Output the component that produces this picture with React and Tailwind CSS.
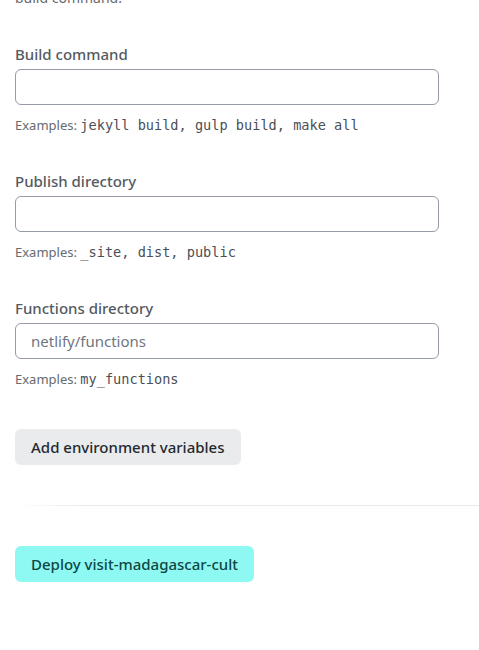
import React from "react";

const sans = "font-['Noto_Sans',_'Open_Sans',_sans-serif]";
const mono = "font-['DejaVu_Sans_Mono',_'Liberation_Mono',_monospace]";

const Field = ({ label, placeholder, examples }) => (
  <div className="flex flex-col">
    <label className="text-[15px] leading-[22px] font-medium text-[#545a61]">
      {label}
    </label>
    <input
      type="text"
      placeholder={placeholder}
      className="mt-1 h-[36px] w-[424px] rounded-[6px] border border-[#959ca6] bg-white px-[15px] text-[15px] text-[#2e3338] placeholder:text-[#6f767e] outline-none"
    />
    <p className="mt-[10px] text-[13px] leading-[20px] text-[#666b70]">
      Examples:{" "}
      <code className={`${mono} text-[13.6px] text-[#4b5057]`}>{examples}</code>
    </p>
  </div>
);

const App = () => {
  return (
    <div className={`${sans} min-h-screen bg-white pl-[15px] overflow-hidden`}>
      <p className="-mt-[12px] text-[14px] leading-[20px] text-[#666b70]">
        build command.
      </p>

      <div className="mt-[35px] flex flex-col gap-[35px]">
        <Field label="Build command" examples="jekyll build, gulp build, make all" />
        <Field label="Publish directory" examples="_site, dist, public" />
        <Field
          label="Functions directory"
          placeholder="netlify/functions"
          examples="my_functions"
        />
      </div>

      <button className="mt-[40px] h-[36px] rounded-[6px] bg-[#e9ebed] px-4 text-[15px] font-medium text-[#24292e]">
        Add environment variables
      </button>

      <div className="mt-[40px] h-px bg-[linear-gradient(to_right,transparent,#e8e9ea_15%)]" />

      <button className="mt-[40px] h-[36px] rounded-[6px] bg-[#8ef9f3] px-4 text-[15px] font-medium text-[#0e4744]">
        Deploy visit-madagascar-cult
      </button>
    </div>
  );
};

export default App;
